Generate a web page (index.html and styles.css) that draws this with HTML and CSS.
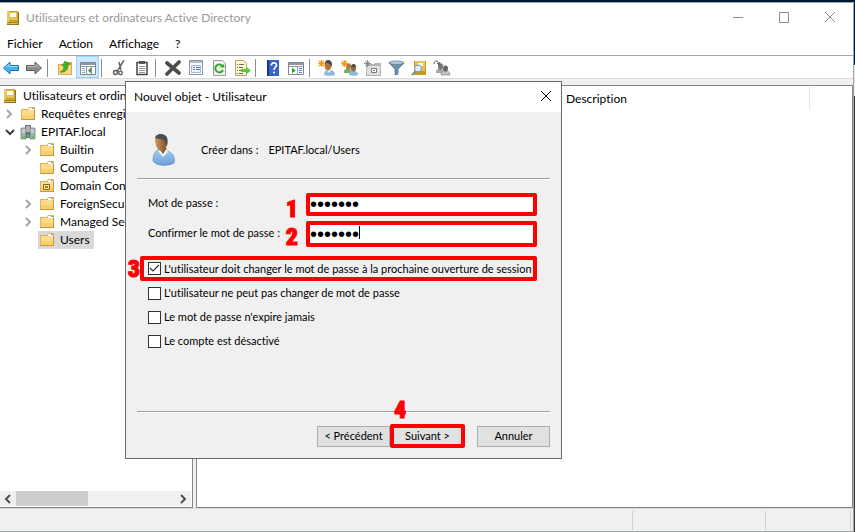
FILE: index.html
```
<!DOCTYPE html>
<html lang="fr">
<head>
<meta charset="utf-8">
<title>Utilisateurs et ordinateurs Active Directory</title>
<link rel="stylesheet" href="styles.css">
</head>
<body>

<!-- icons used more than once -->
<svg class="defs" aria-hidden="true">
  <symbol id="book" viewBox="0 0 16 16">
    <path d="M2 1h11v14H2z" fill="#c9a227"/>
    <path d="M2 1h2v14H2z" fill="#e6cb62"/>
    <path d="M4 2h8v8H4z" fill="#e0c45e"/>
    <path d="M5 3h6v4H5z" fill="#fffbe6"/>
    <path d="M2 12h11v1H2z" fill="#a8861c"/>
    <path d="M2 13h11v1H2z" fill="#d9bd55"/>
    <path d="M2 14h11v1H2zM13 2h1v13h-1z" fill="#94741a"/>
  </symbol>
  <symbol id="folder" viewBox="0 0 16 16">
    <path d="M1 3h7l1-2h6v13H1z" fill="#e0b354"/>
    <path d="M9 2h5v2H9z" fill="#fff"/>
    <path d="M12 2h2v1h-2z" fill="#5aa0e0"/>
    <path d="M2 4h12v9H2z" fill="#fbdc8c"/>
    <path d="M2 9h12v4H2z" fill="#f6d070"/>
    <path d="M1 13h14v1H1zM14 4h1v10h-1z" fill="#c9973a"/>
  </symbol>
  <symbol id="chevron" viewBox="0 0 8 10">
    <path d="M2 1l4 4-4 4" fill="none" stroke="#a6a6a6" stroke-width="2"/>
  </symbol>
</svg>

<div class="window">
  <header class="titlebar">
    <svg class="icon"><use href="#book"/></svg>
    <h1>Utilisateurs et ordinateurs Active Directory</h1>
    <div class="window-buttons">
      <button aria-label="Réduire"><svg viewBox="0 0 12 12"><path d="M1 5.500h10"/></svg></button>
      <button aria-label="Agrandir"><svg viewBox="0 0 12 12"><path d="M1.500 .5h9v10h-9z"/></svg></button>
      <button aria-label="Fermer"><svg viewBox="0 0 12 12"><path d="M1 0l10 10M11 0L1 10"/></svg></button>
    </div>
  </header>

  <nav class="menubar">
    <button>Fichier</button>
    <button>Action</button>
    <button>Affichage</button>
    <button>?</button>
  </nav>

  <div class="toolbar">
    <button aria-label="Page précédente"><svg viewBox="0 0 18 16"><path d="M1.500 8L8 2v3.500h8.500v5H8V14z" fill="#45b0ee" stroke="#1b76b8"/><path d="M3.500 7.500L7 4.500v2h8.500" fill="none" stroke="#a5dcfa"/></svg></button>
    <button aria-label="Page suivante"><svg viewBox="0 0 18 16"><path d="M16.500 8L10 2v3.500H1.500v5H10V14z" fill="#8c8c8c" stroke="#5e5e5e"/><path d="M2.500 6.500H11v-2l3.500 3" fill="none" stroke="#bcbcbc"/></svg></button>
    <span class="sep"></span>
    <button aria-label="Dossier parent"><svg viewBox="0 0 18 16"><path d="M2 4h6l1-2h7v13H2z" fill="#dba94a"/><path d="M3 5h12v9H3z" fill="#f8d684"/><path d="M4 12c3-1 4-3 4-6H6l3-5 5 3-2 1c0 5-3 8-8 7z" fill="#43b026" stroke="#2a8516" stroke-width=".5"/></svg></button>
    <button class="active" aria-label="Arborescence"><svg viewBox="0 0 18 16"><path d="M1.500 2.500h15v12h-15z" fill="#fff" stroke="#7d8790"/><path d="M2 3h14v2H2z" fill="#8f99a3"/><path d="M2 6.500h14M7.500 7v7M12.500 7v7" stroke="#8f99a3" fill="none"/><path d="M3 8.500h3M3 10.500h3M3 12.500h3" stroke="#8aa9c8"/><path d="M12 7.500v6l-3-3z" fill="#29a329"/></svg></button>
    <span class="sep"></span>
    <button aria-label="Couper"><svg viewBox="0 0 18 16"><path d="M14 0L7.500 11M9 2l2 8" stroke="#666" stroke-width="1.500" fill="none"/><circle cx="5.500" cy="12.500" r="2" fill="none" stroke="#555" stroke-width="1.300"/><circle cx="10.500" cy="13" r="1.800" fill="none" stroke="#555" stroke-width="1.300"/></svg></button>
    <button aria-label="Copier"><svg viewBox="0 0 18 16"><path d="M4 2.500h10v12H4z" fill="#fff" stroke="#444" stroke-width="1.500"/><path d="M6 1h6v3H6z" fill="#555"/><path d="M6 6.500h6M6 8.500h6M6 10.500h6M6 12.500h6" stroke="#999"/></svg></button>
    <span class="sep"></span>
    <button aria-label="Supprimer"><svg viewBox="0 0 18 16"><path d="M3 3l12 10M15 2L3 14" stroke="#4a4a4a" stroke-width="3.600" stroke-linecap="round"/></svg></button>
    <button aria-label="Propriétés"><svg viewBox="0 0 18 16"><path d="M2.500 .5h13v14h-13z" fill="#fff" stroke="#8a949e"/><path d="M3 1h12v2H3z" fill="#b3bdc8"/><path d="M4.500 5.500h9v7h-9z" fill="#eef4fa" stroke="#a7b6c6"/><path d="M6 7.500h2M9 7.500h4M6 9.500h2M9 9.500h4" stroke="#4d86bd"/></svg></button>
    <button aria-label="Actualiser"><svg viewBox="0 0 18 16"><path d="M3.500 .5h9l3 3v12h-12z" fill="#f4f4f4" stroke="#9a9a9a"/><path d="M12.500 6A4 4 0 1 0 13 10" fill="none" stroke="#35a829" stroke-width="2"/><path d="M14.500 7.500h-5L14 4z" fill="#35a829"/></svg></button>
    <button aria-label="Exporter la liste"><svg viewBox="0 0 18 16"><path d="M2.500 .5h8l3 3v12h-11z" fill="#fdf6cf" stroke="#b0a478"/><path d="M4 4.500h1M6 4.500h5M4 7.500h1M6 7.500h4M4 10.500h1M6 10.500h3M4 13.500h1M6 13.500h4" stroke="#6b6b6b"/><path d="M8 9h5V6.500l5 4-5 4V12H8z" fill="#5cc83b"/></svg></button>
    <span class="sep"></span>
    <button aria-label="Aide"><svg viewBox="0 0 18 16"><path d="M3 0h12v16H3z" fill="#3a63c8"/><path d="M3 0h2v16H3z" fill="#17348a"/><path d="M7.500 5.500C7 2 12.500 2 12.500 5c0 2.200-2.500 2.200-2.500 5M9 12.500h2" fill="none" stroke="#fff" stroke-width="1.700"/></svg></button>
    <button aria-label="Volet Actions"><svg viewBox="0 0 18 16"><path d="M1.500 2.500h15v12h-15z" fill="#fff" stroke="#7d8790"/><path d="M2 3h14v2H2z" fill="#8f99a3"/><path d="M2 6.500h14M10.500 7v7" stroke="#8f99a3" fill="none"/><path d="M12 8.500h3M12 10.500h3M12 12.500h3" stroke="#3f82c4"/><path d="M5 7.500v6l3.500-3z" fill="#29a329"/></svg></button>
    <span class="sep"></span>
    <button aria-label="Nouvel utilisateur"><svg viewBox="0 0 18 16"><path d="M6 15c0-4 2-5 5-5s6 1 6 5c-2 1-9 1-11 0z" fill="#8bb9e4"/><path d="M9 10l2 3 2-3z" fill="#e8f2fb"/><ellipse cx="10" cy="5.500" rx="3.500" ry="5" fill="#b0743c"/><path d="M7 3c0-4 7-4 7 1v3c-1-3-4-4-7-4z" fill="#4a4a4a"/><path d="M3.500 0v7M0 3.500h7M1 1l5 5M6 1L1 6" stroke="#f39a16" stroke-width="1.200"/></svg></button>
    <button aria-label="Nouveau groupe"><svg viewBox="0 0 18 16"><path d="M3 13c0-4 1-4 4-4s4 1 4 4z" fill="#73b356"/><ellipse cx="7.500" cy="6.500" rx="2.500" ry="3.200" fill="#b07b45"/><path d="M8 15c0-4 2-4 4-4s5 0 5 4c-2 1-7 1-9 0z" fill="#8bb9e4"/><ellipse cx="12.500" cy="8" rx="2.500" ry="3.500" fill="#9a6638"/><path d="M10 7c0-4 5-4 5 0z" fill="#4a4a4a"/><path d="M3.500 0v7M0 3.500h7M1 1l5 5M6 1L1 6" stroke="#f39a16" stroke-width="1.200"/></svg></button>
    <button aria-label="Nouvelle unité d'organisation"><svg viewBox="0 0 18 16"><path d="M2 4h8l1-1h6v13H2z" fill="#b4b4b4"/><path d="M3 6h13v9H3z" fill="#e0e0e0"/><path d="M7.500 8.500h5v4h-5z" fill="#fff" stroke="#777"/><path d="M9 10h2v1H9z" fill="#777"/><path d="M3.500 0v7M0 3.500h7M1 1l5 5M6 1L1 6" stroke="#8c8c8c"/></svg></button>
    <button aria-label="Filtre"><svg viewBox="0 0 18 16"><path d="M2 3l6 6v6l3-1V9l6-6z" fill="#6d93ab" stroke="#44687e" stroke-width=".7"/><ellipse cx="9.500" cy="2.700" rx="7.500" ry="1.700" fill="#b9d2e0" stroke="#44687e" stroke-width=".7"/></svg></button>
    <button aria-label="Rechercher"><svg viewBox="0 0 18 16"><path d="M4 1h12v14H4z" fill="#c49d20"/><path d="M5 1h10v10H5z" fill="#e2c558"/><path d="M8 3h5v3H8z" fill="#fffbe6"/><path d="M6 11l-4 4" stroke="#8a8a8a" stroke-width="2"/><circle cx="8" cy="8.500" r="3.500" fill="#dceefa" stroke="#7b98ad"/></svg></button>
    <button aria-label="Ajouter à un groupe"><svg viewBox="0 0 18 16"><path d="M3 13c0-4 1-4 4-4s4 1 4 4z" fill="#a8a8a8"/><ellipse cx="7.500" cy="6.500" rx="2.500" ry="3.200" fill="#777"/><path d="M8 15c0-4 2-4 4-4s5 0 5 4z" fill="#c4c4c4" stroke="#777" stroke-width=".6"/><ellipse cx="12.500" cy="8.500" rx="2.500" ry="3" fill="#666"/><path d="M1 4c0-4 5-4 5 0M4 3l2 2 1-3" fill="none" stroke="#555"/></svg></button>
  </div>

  <main class="panes">
    <section class="tree-pane">
      <ul class="tree">
        <li class="root"><svg class="icon"><use href="#book"/></svg><span>Utilisateurs et ordinateurs Active Directory</span></li>
        <li class="l1"><svg class="arrow"><use href="#chevron"/></svg><svg class="icon"><use href="#folder"/></svg><span>Requêtes enregistrées</span></li>
        <li class="l1"><svg class="arrow open" viewBox="0 0 10 8"><path d="M1 2l4 4 4-4" fill="none" stroke="#404040" stroke-width="2"/></svg><svg class="icon" viewBox="0 0 16 16"><path d="M5 1h6v13H5z" fill="#6a7781"/><path d="M1 4h5v11H1zM10 4h5v11h-5z" fill="#a5b0b8" stroke="#5c6973" stroke-width=".6"/><path d="M6 3h4M6 5h4M6 7h4M2 6h3M2 8h3M11 6h3M11 8h3" stroke="#e8eef2"/><path d="M3 12h2v2H3zM7 11h2v2H7zM12 12h2v2h-2z" fill="#3ed52b"/></svg><span>EPITAF.local</span></li>
        <li class="l2"><svg class="arrow"><use href="#chevron"/></svg><svg class="icon"><use href="#folder"/></svg><span>Builtin</span></li>
        <li class="l2"><i class="arrow"></i><svg class="icon"><use href="#folder"/></svg><span>Computers</span></li>
        <li class="l2"><i class="arrow"></i><svg class="icon" viewBox="0 0 16 16"><use href="#folder"/><path d="M4.500 6.500h6v5h-6z" fill="#f3e3a0" stroke="#8a6a10"/><path d="M6 8h3v2H6z" fill="#a07c14"/></svg><span>Domain Controllers</span></li>
        <li class="l2"><svg class="arrow"><use href="#chevron"/></svg><svg class="icon"><use href="#folder"/></svg><span>ForeignSecurityPrincipals</span></li>
        <li class="l2"><svg class="arrow"><use href="#chevron"/></svg><svg class="icon"><use href="#folder"/></svg><span>Managed Service Accounts</span></li>
        <li class="l2 selected"><i class="arrow"></i><span class="hit"><svg class="icon"><use href="#folder"/></svg><span>Users</span></span></li>
      </ul>
      <div class="scrollbar">
        <button aria-label="Défiler à gauche"><svg viewBox="0 0 8 10"><path d="M6 1L2 5l4 4"/></svg></button>
        <div class="track"><div class="thumb"></div></div>
        <button aria-label="Défiler à droite"><svg viewBox="0 0 8 10"><path d="M2 1l4 4-4 4"/></svg></button>
      </div>
    </section>

    <section class="list-pane">
      <table>
        <tr>
          <th class="col-name"></th>
          <th class="col-desc">Description</th>
          <th></th>
        </tr>
      </table>
    </section>
  </main>

  <footer class="statusbar">
    <span class="main-status"></span>
    <span class="status-mid"></span>
    <span class="status-end"></span>
  </footer>
</div>

<!-- new user dialog -->
<form class="dialog" role="dialog" aria-labelledby="dialog-title">
  <div class="dialog-title">
    <h2 id="dialog-title">Nouvel objet - Utilisateur</h2>
    <button type="button" aria-label="Fermer"><svg viewBox="0 0 12 12"><path d="M1 0l10 10M11 0L1 10"/></svg></button>
  </div>

  <div class="dialog-body">
    <div class="context">
      <svg class="avatar" viewBox="0 0 24 32">
        <defs>
          <linearGradient id="skin"><stop offset="0" stop-color="#d39a64"/><stop offset="1" stop-color="#7c4d24"/></linearGradient>
          <linearGradient id="shirt" x2="0" y2="1"><stop offset="0" stop-color="#a9cdf0"/><stop offset="1" stop-color="#6a9fd6"/></linearGradient>
        </defs>
        <path d="M1 27c0-6 2-10 5-11 5-1 10 0 13 3 3 2 4 6 3 10-4 3-17 4-21-2z" fill="url(#shirt)" stroke="#5688bd" stroke-width=".6"/>
        <path d="M6 17l5 6 5-5-2-3z" fill="#eef6fd"/>
        <path d="M6 13l5 7 4-6z" fill="#8d5a2d"/>
        <path d="M3 5c0-3 12-4 12 1 0 5-1 11-5 11-4 0-7-5-7-12z" fill="url(#skin)"/>
        <path d="M3 4c1-5 8-5 11-2 2 2 2 6 1 10-1 0-1-4-3-6-3-1-6-1-9-2z" fill="#4c4c4c"/>
      </svg>
      <span>Créer dans :</span>
      <span>EPITAF.local/Users</span>
    </div>
    <hr>

    <div class="fields">
      <label for="pwd">Mot de passe :</label>
      <div class="field mark"><span class="num">1</span><input type="password" id="pwd" value="azertyu"></div>
      <label for="pwd2">Confirmer le mot de passe :</label>
      <div class="field mark tall focused"><span class="num">2</span><input type="password" id="pwd2" value="azertyu"></div>
    </div>

    <div class="options">
      <label class="mark first"><span class="num">3</span><input type="checkbox" checked>L'utilisateur doit changer le mot de passe à la prochaine ouverture de session</label>
      <label><input type="checkbox">L'utilisateur ne peut pas changer de mot de passe</label>
      <label><input type="checkbox">Le mot de passe n'expire jamais</label>
      <label><input type="checkbox">Le compte est désactivé</label>
    </div>

    <hr class="bottom">
    <div class="actions">
      <button type="button">&lt; Précédent</button>
      <div class="mark"><span class="num">4</span><button type="button">Suivant &gt;</button></div>
      <button type="button" class="cancel">Annuler</button>
    </div>
  </div>
</form>

</body>
</html>
```

FILE: styles.css
```
* {
  box-sizing: border-box;
}

body {
  margin: 0;
  height: 100vh;
  padding: 2px 1px 0 0;
  overflow: hidden;
  background: linear-gradient(#001737 65px, #e8e8e8 65px, #e8e8e8 96px, #3a3a3a 96px);
  font: 12px/18px Lato, "Segoe UI", sans-serif;
  font-variant-ligatures: none;
  color: #000;
}

button {
  font: inherit;
  font-variant-ligatures: none;
  color: inherit;
  border: 0;
  padding: 0;
  background: none;
}

h1, h2, ul {
  margin: 0;
  padding: 0;
  font-size: inherit;
  font-weight: normal;
}

.defs {
  position: absolute;
  width: 0;
  height: 0;
}

.icon {
  width: 16px;
  height: 16px;
  flex: none;
}

/* main window */
.window {
  height: 100%;
  display: flex;
  flex-direction: column;
  background: #fff;
  border: solid #a0a3a8;
  border-width: 1px 1px 1px 0;
}

.titlebar {
  display: flex;
  align-items: center;
  height: 30px;
  padding-left: 5px;
  color: #999;
}

.titlebar h1 {
  margin-left: 5px;
  flex: 1;
}

.window-buttons {
  display: flex;
}

.window-buttons button {
  width: 46px;
  height: 28px;
}

.window-buttons svg, .dialog-title svg {
  display: block;
  width: 12px;
  height: 12px;
  margin: auto;
  fill: none;
  stroke: #8c8c8c;
}

.menubar {
  display: flex;
  gap: 16px;
  height: 22px;
  padding-left: 7px;
}

.toolbar {
  display: flex;
  height: 24px;
  margin-left: -1px;
  border-top: 1px solid #a8a8a8;
  border-bottom: 1px solid #dadada;
}

.toolbar button {
  width: 23px;
  height: 22px;
  padding-top: 2px;
}

.toolbar svg {
  display: block;
  width: 18px;
  height: 16px;
  margin: auto;
}

.toolbar .active {
  background: #cce8ff;
  border: 1px solid #99d1ff;
}

.sep {
  width: 1px;
  height: 18px;
  margin: 3px 5px 0 2px;
  background: #8d8d8d;
}

/* tree and list */
.panes {
  flex: 1;
  min-height: 0;
  display: flex;
  gap: 3px;
  padding-top: 6px;
  background: #f0f0f0;
}

.tree-pane {
  width: 193px;
  display: flex;
  flex-direction: column;
  justify-content: space-between;
  background: #fff;
  border: solid #828790;
  border-width: 1px 1px 1px 0;
}

.tree {
  list-style: none;
  overflow: hidden;
  white-space: nowrap;
  padding-top: 1px;
}

.tree li, .hit {
  display: flex;
  align-items: center;
  height: 18px;
}

.tree .root {
  padding-left: 2px;
}

.tree .l1 {
  padding-left: 5px;
}

.tree .l2 {
  padding-left: 24px;
}

.tree .icon + span {
  margin-left: 5px;
}

.arrow {
  flex: none;
  width: 8px;
  height: 10px;
  margin-right: 7px;
}

.arrow.open {
  width: 10px;
  margin-right: 5px;
}

.hit {
  margin-left: -1px;
  padding: 0 4px 0 1px;
  background: #d9d9d9;
}

.scrollbar {
  display: flex;
  height: 15px;
  margin: 0 1px 1px 0;
  background: #f0f0f0;
}

.scrollbar button {
  width: 16px;
}

.scrollbar svg {
  display: block;
  width: 8px;
  height: 10px;
  margin: auto;
  fill: none;
  stroke: #505050;
  stroke-width: 2;
}

.track {
  flex: 1;
}

.thumb {
  width: 45%;
  height: 100%;
  background: #cdcdcd;
}

.list-pane {
  flex: 1;
  background: #fff;
  border: 1px solid #828790;
}

.list-pane table {
  width: 100%;
  margin-top: 1px;
  border-collapse: collapse;
}

.list-pane th {
  height: 23px;
  padding: 0 0 0 4px;
  text-align: left;
  font-weight: normal;
}

.col-name {
  width: 365px;
}

.col-desc {
  width: 247px;
  border-right: 1px solid #e5e5e5;
}

.statusbar {
  display: flex;
  height: 23px;
  padding: 2px 2px 1px 0;
  background: #f0f0f0;
  border-top: 1px solid #d5d5d5;
}

.statusbar span {
  border-right: 1px solid #d0d0d0;
}

.main-status {
  flex: 1;
}

.status-mid {
  width: 133px;
}

.status-end {
  width: 85px;
}

/* dialog, over the window */
.dialog {
  position: absolute;
  left: 125px;
  top: 81px;
  width: 437px;
  background: #f0f0f0;
  border: 1px solid #6b6b6b;
}

.dialog-title {
  display: flex;
  justify-content: space-between;
  align-items: center;
  height: 30px;
  padding-left: 8px;
  background: #fff;
}

.dialog-title button {
  width: 30px;
  height: 30px;
}

.dialog-title svg {
  stroke: #000;
}

.dialog-body {
  padding: 22px 11px 10px;
  font: 11px/14px Lato, Arial, sans-serif;
  font-variant-ligatures: none;
}

.context {
  display: flex;
  align-items: center;
  gap: 10px;
  height: 32px;
  padding-left: 15px;
}

.avatar {
  width: 24px;
  height: 32px;
  margin-right: 15px;
}

hr {
  height: 2px;
  margin: 12px 0 0;
  border: 0;
  border-top: 1px solid #a0a0a0;
  background: #fff;
}

.fields {
  display: grid;
  grid-template-columns: 158px 231px;
  row-gap: 5px;
  align-items: center;
  margin-top: 13px;
  padding-left: 11px;
}

.fields label {
  padding-bottom: 3px;
}

/* numbered red frames of the guide */
.mark {
  position: relative;
  border: 4px solid #f00;
  border-radius: 2px;
}

.num {
  position: absolute;
  right: 100%;
  margin-right: 12px;
  font: 900 24px/24px "Roboto Condensed", "Liberation Sans Narrow", Impact, sans-serif;
  color: #f00;
  -webkit-text-stroke: 1px #f00;
}

.field {
  height: 23px;
  background: #fff;
}

.field.tall {
  height: 26px;
}

.field input {
  display: block;
  width: 100%;
  height: 100%;
  padding: 0;
  border: 0;
  outline: 0;
  background: none;
  font: 20px "Liberation Sans", Arial, sans-serif;
}

.focused::after {
  content: "";
  position: absolute;
  left: 49px;
  top: 1px;
  width: 1px;
  height: 13px;
  background: #000;
}

.options {
  margin-top: 9px;
  padding-left: 3px;
}

.options label {
  display: flex;
  align-items: center;
  width: max-content;
  height: 24px;
  padding-left: 8px;
}

.options .first {
  height: 25px;
  padding: 0 1px 0 4px;
}

.options .num {
  margin-right: 4px;
}

.options input {
  appearance: none;
  width: 13px;
  height: 13px;
  margin: 0 3px 0 0;
  background: #fff;
  border: 1px solid #333;
}

.options input:checked {
  background: #fff url("data:image/svg+xml,%3Csvg xmlns='http://www.w3.org/2000/svg' viewBox='0 0 11 11'%3E%3Cpath d='M1 5l3 3 6-6' fill='none' stroke='%23333' stroke-width='1.200'/%3E%3C/svg%3E");
}

hr.bottom {
  margin-top: 58px;
}

.actions {
  display: flex;
  justify-content: flex-end;
  align-items: center;
  height: 24px;
  margin-top: 11px;
}

.actions button {
  width: 73px;
  height: 21px;
  background: #e1e1e1;
  border: 1px solid #adadad;
}

.actions .mark {
  height: 24px;
}

.actions .mark button {
  width: 67px;
  height: 100%;
  border: 0;
  display: block;
}

.actions .num {
  right: auto;
  left: 0;
  bottom: 100%;
  margin: 0 0 6px;
}

.actions .cancel {
  margin-left: 12px;
}
```
